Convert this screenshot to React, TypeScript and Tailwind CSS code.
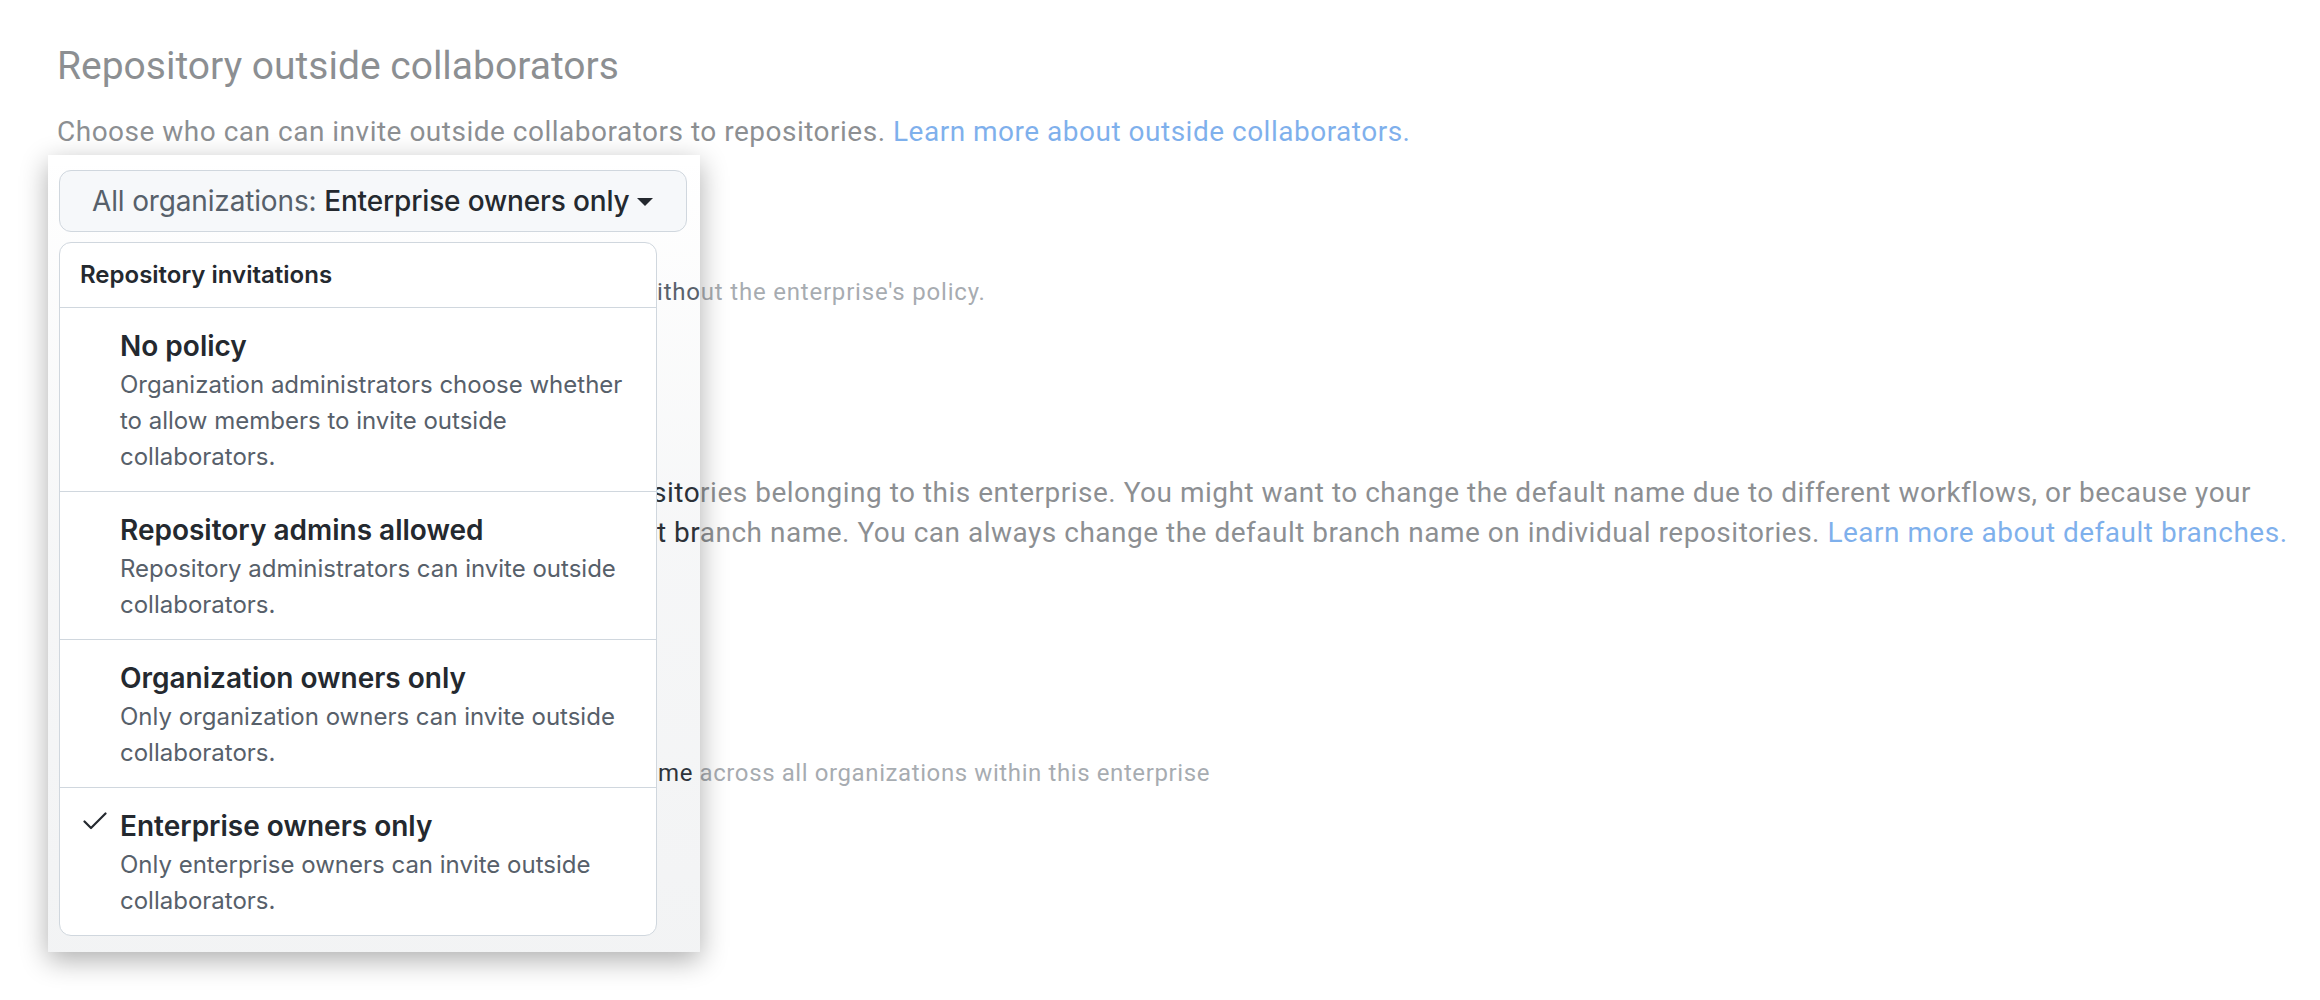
import React from "react";

const options = [
  {
    title: "No policy",
    desc: "Organization administrators choose whether to allow members to invite outside collaborators.",
    checked: false,
  },
  {
    title: "Repository admins allowed",
    desc: "Repository administrators can invite outside collaborators.",
    checked: false,
  },
  {
    title: "Organization owners only",
    desc: "Only organization owners can invite outside collaborators.",
    checked: false,
  },
  {
    title: "Enterprise owners only",
    desc: "Only enterprise owners can invite outside collaborators.",
    checked: true,
  },
];

function Check() {
  return (
    <svg width="24" height="18" viewBox="0 0 24 18" className="absolute left-[23px] top-[24px]">
      <polyline points="1.5,9.5 8,16 22.5,1.5" fill="none" stroke="#24292f" strokeWidth="2.2" strokeLinecap="round" strokeLinejoin="round" />
    </svg>
  );
}

export default function App() {
  return (
    <div className="relative w-full h-[1000px] bg-white overflow-hidden font-['Roboto',sans-serif]">
      {/* Page underneath (faded by the spotlight); parts under the dropdown are covered */}
      <div className="pl-[57px] pt-[42px] whitespace-nowrap">
        <h2 className="text-[39px] leading-[48px] text-[#24292f]">Repository outside collaborators</h2>
        <p className="mt-[24px] text-[28px] leading-[36px] tracking-[0.5px] text-[#24292f]">
          Choose who can can invite outside collaborators to repositories.{" "}
          <a className="text-[#0969da]">Learn more about outside collaborators.</a>
        </p>

        <p className="mt-[124px] text-[24px] leading-[36px] tracking-[0.8px] text-[#57606a]">
          <span className="inline-block w-[600px]" />
          ithout the enterprise's policy.
        </p>

        <p className="mt-[163px] text-[28px] leading-[40px] tracking-[0.5px] text-[#24292f]">
          <span className="inline-block w-[595px]" />
          sitories belonging to this enterprise. You might want to change the default name due to different workflows, or because your
          <br />
          <span className="inline-block w-[600px]" />
          t branch name. You can always change the default branch name on individual repositories.{" "}
          <a className="text-[#0969da]">Learn more about default branches.</a>
        </p>

        <p className="mt-[202px] text-[24px] leading-[36px] tracking-[0.6px] text-[#57606a]">
          <span className="inline-block w-[601px]" />
          <span className="text-[#24292f]">me</span> across all organizations within this enterprise
        </p>
      </div>

      {/* Spotlight panel with the open dropdown */}
      <div className="absolute left-[48px] top-[155px] w-[652px] h-[797px] bg-linear-to-b from-[#8c959f]/0 via-[#8c959f]/[0.08] to-[#8c959f]/[0.11] shadow-[0_8px_26px_rgba(0,0,0,0.32),0_0_0_4000px_rgba(255,255,255,0.48)] pt-[15px] pl-[11px] font-['Inter',sans-serif]">
        <button className="flex items-center w-[628px] h-[62px] pl-[32px] pr-[24px] rounded-[12px] border border-[#d0d7de] bg-[#f6f8fa] text-[28px] leading-[40px] tracking-[-0.15px] whitespace-nowrap">
          <span className="text-[#57606a]">All organizations:&nbsp;</span>
          <span className="font-medium text-[#24292f]">Enterprise owners only</span>
          <svg width="16" height="8" viewBox="0 0 16 8" className="ml-[8px] mt-[2px] shrink-0">
            <polygon points="0,0 16,0 8,8" fill="#24292f" />
          </svg>
        </button>

        <div className="mt-[10px] w-[598px] rounded-[12px] border border-[#d0d7de] bg-white overflow-hidden">
          <div className="px-[20px] py-[14px] border-b border-[#d0d7de] text-[24px] leading-[36px] font-semibold text-[#24292f]">
            Repository invitations
          </div>
          {options.map((o, i) => (
            <div
              key={o.title}
              className={`relative pl-[60px] pr-[20px] pt-[17px] pb-[16px] ${i > 0 ? "border-t border-[#d0d7de]" : ""}`}
            >
              {o.checked && <Check />}
              <div className="text-[28px] leading-[42px] font-semibold text-[#24292f]">{o.title}</div>
              <div className="text-[24px] leading-[36px] text-[#57606a]">{o.desc}</div>
            </div>
          ))}
        </div>
      </div>
    </div>
  );
}
